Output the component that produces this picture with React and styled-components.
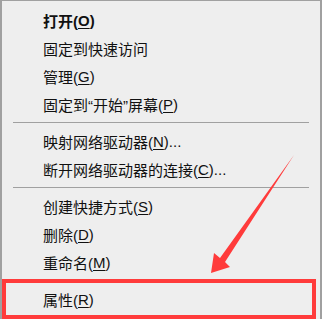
import styled, { createGlobalStyle } from "styled-components"

const Global = createGlobalStyle`
body {
    margin: 0;
    background: #fff;
}
`

const Menu = styled.div`
position: relative;
width: 322px;
height: 319px;
box-sizing: border-box;
background-color: #eeeeee;
border-top: 1px solid #a0a0a0;
border-left: 2px solid #a0a0a0;
border-right: 2px solid #a0a0a0;
padding-top: 5px;
font-family: "Liberation Sans", "Noto Sans CJK SC", sans-serif;
font-size: 15px;
color: #111;
overflow: hidden;
`

const Item = styled.div`
height: 28px;
display: flex;
align-items: center;
padding-left: 41px;
font-weight: ${p => (p.bold ? 700 : 400)};
white-space: nowrap;
u {
    text-decoration: underline;
    text-underline-offset: 2px;
}
`

const Separator = styled.div`
height: 9px;
display: flex;
align-items: center;
padding: 0 11px 0 11px;
&::after {
    content: "";
    flex: 1;
    height: 1px;
    background-color: #a0a0a0;
}
`

const Highlight = styled.div`
position: absolute;
left: 0;
top: 278px;
width: 314px;
height: 40px;
box-sizing: border-box;
border: 4px solid #ff3b3b;
`

const Arrow = styled.svg`
position: absolute;
left: -2px;
top: -1px;
pointer-events: none;
`

export default function App() {
    return (
        <>
            <Global />
            <Menu>
                <Item bold>打开(<u>O</u>)</Item>
                <Item>固定到快速访问</Item>
                <Item>管理(<u>G</u>)</Item>
                <Item>固定到“开始”屏幕(<u>P</u>)</Item>
                <Separator />
                <Item>映射网络驱动器(<u>N</u>)...</Item>
                <Item>断开网络驱动器的连接(<u>C</u>)...</Item>
                <Separator />
                <Item>创建快捷方式(<u>S</u>)</Item>
                <Item>删除(<u>D</u>)</Item>
                <Item>重命名(<u>M</u>)</Item>
                <Separator />
                <Item>属性(<u>R</u>)</Item>
                <Highlight />
                <Arrow width="322" height="319" viewBox="0 0 322 319">
                    <polygon
                        points="211,273 214,253 220,258 294,155 225,262 230,267"
                        fill="#ff3b3b"
                    />
                </Arrow>
            </Menu>
        </>
    )
}
